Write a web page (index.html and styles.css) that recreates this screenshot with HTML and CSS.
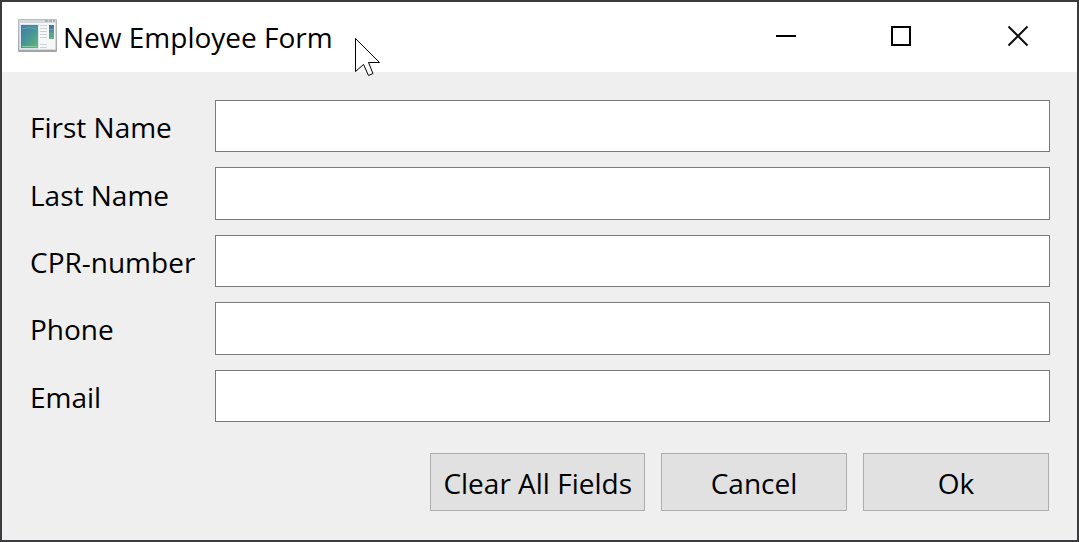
FILE: index.html
```html
<!DOCTYPE html>
<html lang="en">
<head>
<meta charset="utf-8">
<title>New Employee Form</title>
<link rel="stylesheet" href="styles.css">
</head>
<body>
<main class="window">
  <header class="titlebar">
    <svg class="app-icon" width="40" height="34" viewBox="0 0 40 34" aria-hidden="true">
      <defs>
        <linearGradient id="pane" x1="0" y1="0" x2="1" y2="1">
          <stop offset="0" stop-color="#4279a8"/>
          <stop offset=".5" stop-color="#469696"/>
          <stop offset="1" stop-color="#68b873"/>
        </linearGradient>
        <linearGradient id="side" x1="0" y1="0" x2="0" y2="1">
          <stop offset="0" stop-color="#3f72ab"/>
          <stop offset="1" stop-color="#63b783"/>
        </linearGradient>
        <linearGradient id="frame" x1="0" y1="0" x2="0" y2="1">
          <stop offset="0" stop-color="#b9bec3"/>
          <stop offset="1" stop-color="#a2a4a8"/>
        </linearGradient>
      </defs>
      <rect x="0" y="0" width="39" height="33" rx="1" fill="url(#frame)"/>
      <rect x="1" y="1" width="37" height="30" fill="#d4d7db"/>
      <rect x="2" y="4" width="35" height="26" fill="#f6f7f8"/>
      <path d="M27 2h10" stroke="#aab1b9" stroke-width="2" stroke-dasharray="3 1"/>
      <rect x="2" y="5" width="19" height="25" fill="#dce8ef"/>
      <rect x="3" y="6" width="17" height="23" fill="url(#pane)"/>
      <path d="M4 10Q12 7 19 10" fill="none" stroke="#6ba0bd"/>
      <path d="M4 27.500h15" stroke="#8bcba0"/>
      <path d="M22 6.500h7M22 9.500h7M22 12.500h7M22 15.500h7M22 18.500h7M22 25.500h7M22 28.500h7" stroke="#cfd1d4"/>
      <rect x="31" y="6" width="5" height="14" fill="url(#side)"/>
      <path d="M31 10.500h5M31 14.500h5" stroke="#6ba0bd"/>
    </svg>
    <h1 class="title">New Employee Form</h1>
    <div class="caption-buttons">
      <button class="caption-button" type="button" aria-label="Minimize">
        <svg width="22" height="22" viewBox="0 0 22 22"><path d="M0 11h20" stroke="#000" stroke-width="2"/></svg>
      </button>
      <button class="caption-button" type="button" aria-label="Maximize">
        <svg width="22" height="22" viewBox="0 0 22 22"><rect x="0" y="2" width="18" height="18" fill="none" stroke="#000" stroke-width="2"/></svg>
      </button>
      <button class="caption-button" type="button" aria-label="Close">
        <svg width="22" height="22" viewBox="0 0 22 22"><path d="M.5 1.500l19 19M19.500 1.500l-19 19" stroke="#111" stroke-width="2"/></svg>
      </button>
    </div>
    <svg class="pointer" width="28" height="40" viewBox="0 0 28 40" aria-hidden="true">
      <path d="M.5.5v33l8-7 5 11 4.500-2-4.500-11H24.500z" fill="#fff" stroke="#000"/>
    </svg>
  </header>
  <form class="form">
    <div class="fields">
      <label for="first-name">First Name</label><input id="first-name" type="text">
      <label for="last-name">Last Name</label><input id="last-name" type="text">
      <label for="cpr">CPR-number</label><input id="cpr" type="text">
      <label for="phone">Phone</label><input id="phone" type="tel">
      <label for="email">Email</label><input id="email" type="email">
    </div>
    <div class="actions">
      <button class="action" type="reset">Clear All Fields</button>
      <button class="action" type="button">Cancel</button>
      <button class="action" type="submit">Ok</button>
    </div>
  </form>
</main>
</body>
</html>
```
FILE: styles.css
```css
* {
  box-sizing: border-box;
}

body {
  margin: 0;
  font-family: "Segoe UI", "Open Sans", "Noto Sans", sans-serif;
  font-size: 28px;
  line-height: 36px;
  color: #000;
}

.window {
  display: flex;
  flex-direction: column;
  min-height: 100vh;
  border: 2px solid #3b3b3d;
  background: #efefef;
}

.titlebar {
  position: relative;
  display: flex;
  align-items: center;
  min-height: 70px;
  padding: 0 0 2px 16px;
  background: #fff;
}

.app-icon {
  flex: none;
}

.title {
  margin: 0 auto 0 5px;
  padding-top: 2px;
  font-size: 28px;
  font-weight: 400;
}

.caption-buttons {
  display: flex;
  align-self: stretch;
}

.caption-button {
  display: flex;
  align-items: center;
  justify-content: center;
  width: 116px;
  padding: 0;
  border: 0;
  background: none;
}

.caption-button svg {
  overflow: visible;
}

.pointer {
  position: absolute;
  left: 353px;
  top: 36px;
}

.form {
  display: flex;
  flex: 1;
  flex-direction: column;
  gap: 31px;
  padding: 28px 27px 29px 28px;
}

.fields {
  display: grid;
  flex: 1;
  grid-template-columns: 170px 1fr;
  grid-auto-rows: 1fr;
  gap: 15px;
}

.fields label {
  align-self: center;
  padding-top: 2px;
  white-space: nowrap;
}

.fields input {
  width: 100%;
  min-width: 0;
  min-height: 52px;
  padding: 0 8px;
  border: 1px solid #7a7a7a;
  border-radius: 0;
  background: #fff;
  font: inherit;
}

.actions {
  display: flex;
  justify-content: flex-end;
  gap: 16px;
  padding-right: 1px;
}

.action {
  min-width: 186px;
  height: 58px;
  padding: 2px 12px 0;
  border: 1px solid #adadad;
  background: #e1e1e1;
  color: #000;
  font: inherit;
}
```
